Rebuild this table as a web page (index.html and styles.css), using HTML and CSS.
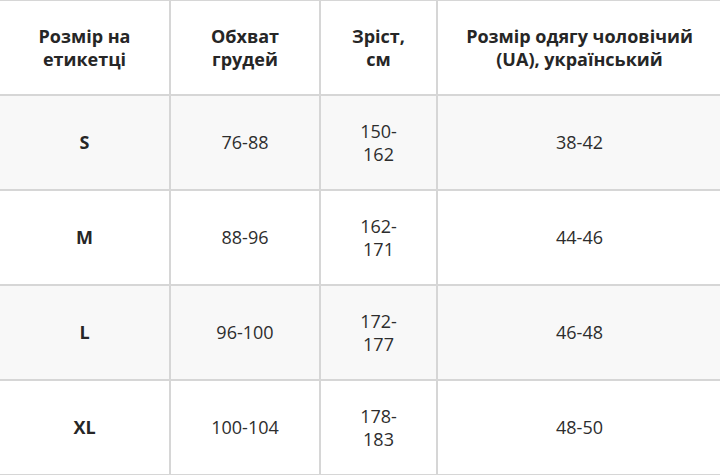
FILE: index.html
```html
<!DOCTYPE html>
<html lang="uk">
<head>
<meta charset="utf-8">
<title>Таблиця розмірів</title>
<link rel="stylesheet" href="styles.css">
</head>
<body>
<table class="sizes">
  <colgroup>
    <col class="c1"><col class="c2"><col class="c3"><col class="c4">
  </colgroup>
  <thead>
    <tr class="head">
      <th>Розмір на етикетці</th>
      <th>Обхват грудей</th>
      <th class="narrow">Зріст, см</th>
      <th>Розмір одягу чоловічий (UA), український</th>
    </tr>
  </thead>
  <tbody>
    <tr class="odd"><td class="size">S</td><td>76-88</td><td class="narrow">150-162</td><td>38-42</td></tr>
    <tr><td class="size">M</td><td>88-96</td><td class="narrow">162-171</td><td>44-46</td></tr>
    <tr class="odd"><td class="size">L</td><td>96-100</td><td class="narrow">172-177</td><td>46-48</td></tr>
    <tr><td class="size">XL</td><td>100-104</td><td class="narrow">178-183</td><td>48-50</td></tr>
  </tbody>
</table>
</body>
</html>
```

FILE: styles.css
```css
html, body {
  margin: 0;
  padding: 0;
  background: #ffffff;
  overflow: hidden;
}
body {
  font-family: "Open Sans", "Liberation Sans", sans-serif;
  color: #2d2d2d;
}
.sizes {
  border-collapse: collapse;
  table-layout: fixed;
  width: 723px;
  margin-left: -2px;
  margin-top: -1px;
}
.c1 { width: 171px; }
.c2 { width: 150px; }
.c3 { width: 117px; }
.c4 { width: 285px; }
.sizes th,
.sizes td {
  border: 2px solid #d6d6d6;
  text-align: center;
  vertical-align: middle;
  font-size: 18px;
  line-height: 23px;
  padding: 0 12px;
}
.sizes .narrow {
  padding: 0 30px;
}
.sizes th {
  font-weight: 700;
  color: #262626;
}
.head { height: 95px; }
.sizes tbody tr { height: 95px; }
.odd { background: #f8f8f8; }
.size { font-weight: 700; color: #262626; }
```
